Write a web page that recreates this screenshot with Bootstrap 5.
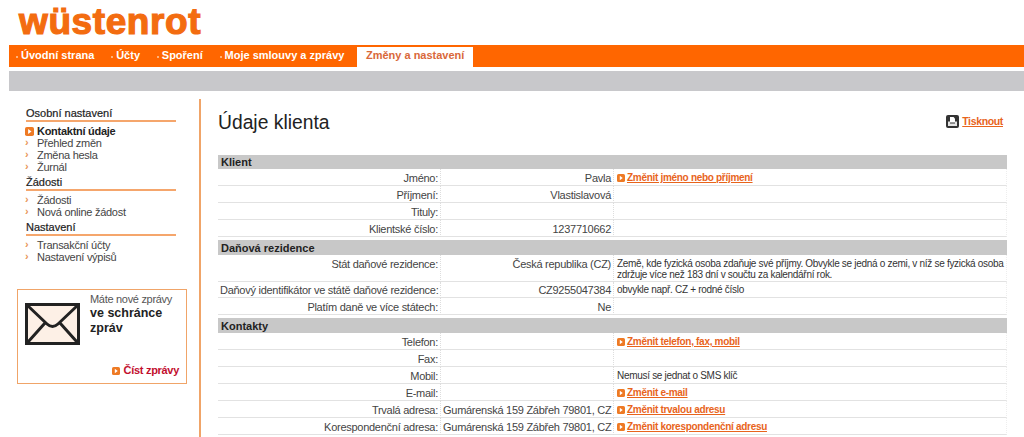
<!DOCTYPE html>
<html lang="cs">
<head>
    <meta charset="UTF-8">
    <meta name="viewport" content="width=device-width, initial-scale=1.0">
    <title>Údaje klienta</title>
    <link href="https://cdn.jsdelivr.net/npm/bootstrap@5.3.0/dist/css/bootstrap.min.css" rel="stylesheet">
    <style>
        body { font-family: "Liberation Sans", Arial, sans-serif; font-size: 11px; line-height: 12px; color: #333; background: #fff; }
        a { color: inherit; }
        .brand-row { height: 45px; padding-left: 19px; }
        .brand-logo { font-size: 37px; line-height: 43px; font-weight: 700; color: #f36c10; letter-spacing: .6px; -webkit-text-stroke: 1.2px #f36c10; }
        .main-menu { margin-left: 9px; height: 22px; background: #ff6600; padding-top: 2px; font-size: 11px; font-weight: 700; color: #fff; }
        .main-menu a { color: #fff; text-decoration: none; line-height: 17px; }
        .menu-item { padding-left: 12px; margin-right: 9.800px; position: relative; }
        .menu-item::before { content: ""; position: absolute; left: 7px; top: 9px; width: 2px; height: 2px; background: #ffb27a; }
        .menu-active { margin-left: 3px; width: 116px; background: #fff; text-align: center; }
        .main-menu .menu-active a { color: #d9683a; }
        .sub-bar { margin: 4px 0 0 9px; height: 20px; background: #c8c8cb; }
        .page-body { margin-top: 8px; height: 338px; }
        .side-col { width: 201px; flex: none; border-right: 2px solid #f0a468; padding: 8px 0 0 17px; }
        .side-head { width: 150px; margin: 0 0 0 9px; font-size: 11px; font-weight: 400; line-height: 13px; color: #222; border-bottom: 2px solid #f5a66c; -webkit-text-stroke: .2px #222; }
        .side-head-next { margin-top: 3px; }
        .side-list { list-style: none; margin: 3px 0 0; padding: 0 0 0 8px; font-size: 11px; letter-spacing: -.27px; line-height: 12px; color: #444; }
        .side-list li { position: relative; padding-left: 12px; }
        .side-list li::before { content: "›"; position: absolute; left: 0; top: -1px; color: #e8955a; font-weight: 700; }
        .side-list li.side-active { font-weight: 700; color: #222; }
        .side-list li.side-active::before { content: none; }
        .side-list li.side-active svg { position: absolute; left: 0; top: 2px; }
        .mail-box { width: 170px; height: 95px; margin-top: 26px; border: 1px solid #f0a468; padding: 2px 7px 0 7px; position: relative; }
        .mail-ico { margin-top: 11px; margin-right: 10px; }
        .mail-text { font-size: 11px; letter-spacing: -.3px; line-height: 14px; color: #555; }
        .mail-strong { display: block; font-size: 12.500px; letter-spacing: 0; font-weight: 700; color: #222; line-height: 15px; }
        .mail-link { position: absolute; right: 7px; bottom: 7px; color: #c20e2e; font-weight: 700; font-size: 11px; letter-spacing: -.3px; line-height: 12px; text-decoration: none; }
        .mail-link .arrow-ico { margin-right: 4px; }
        .content-col { padding: 12px 17px 0 17px; min-width: 0; }
        .title-row { width: 789px; height: 44px; }
        .page-title { font-size: 19.300px; line-height: 24px; font-weight: 400; color: #222; margin: 0; }
        .print-link { color: #e8641c; font-weight: 700; font-size: 10.500px; letter-spacing: -.35px; margin-right: 4px; margin-top: 4px; }
        .print-ico { margin-top: 4px; margin-right: 3px; }
        .client-table { width: 789px; table-layout: fixed; border-collapse: separate; border-spacing: 0; }
        .client-table th { background: #c8c8c8; color: #222; font-size: 11px; font-weight: 700; height: 14px; padding: 0 3px; line-height: 13px; }
        .client-table td { height: 17px; padding: 2px 2px 0; border-bottom: 1px solid #e2e2e2; vertical-align: middle; line-height: 12px; letter-spacing: -.27px; white-space: nowrap; }
        .client-table .sect-gap th { border-top: 3px solid #fff; height: 18px; padding-top: 1px; }
        .client-table td.cell-label { text-align: right; border-right: 1px dotted #ddd; color: #444; }
        .client-table td.cell-value { text-align: right; border-right: 1px dotted #ddd; color: #444; }
        .client-table td.cell-note { color: #333; font-size: 10px; letter-spacing: -.3px; padding-left: 3px; padding-right: 0; border-right: 1px dotted #eee; white-space: normal; }
        .client-table tr.row-tall td { height: 27px; padding-top: 3px; vertical-align: top; }
        .client-table tr.row-tall td.cell-note { line-height: 11px; }
        .client-table tr.row-short td { height: 16px; padding-top: 1px; }
        .change-link { color: #e8641c; font-weight: 700; font-size: 10px; letter-spacing: -.3px; }
        .arrow-ico { vertical-align: -1px; margin-right: 2px; }
    </style>
</head>
<body>
    <svg width="0" height="0" class="position-absolute">
        <symbol id="go" viewBox="0 0 10 10">
            <rect width="10" height="10" rx="2" fill="#ee7a24"/>
            <path d="M3.500 2.300 7.200 5 3.500 7.700z" fill="#fff"/>
        </symbol>
    </svg>

    <div class="brand-row">
        <div class="brand-logo">wüstenrot</div>
    </div>

    <div class="main-menu d-flex">
        <div class="menu-item"><a href="#">Úvodní strana</a></div>
        <div class="menu-item"><a href="#">Účty</a></div>
        <div class="menu-item"><a href="#">Spoření</a></div>
        <div class="menu-item"><a href="#">Moje smlouvy a zprávy</a></div>
        <div class="menu-active"><a href="#">Změny a nastavení</a></div>
    </div>
    <div class="sub-bar"></div>

    <div class="page-body d-flex">
        <div class="side-col">
            <h6 class="side-head">Osobní nastavení</h6>
            <ul class="side-list">
                <li class="side-active"><svg width="9" height="9"><use href="#go"/></svg>Kontaktní údaje</li>
                <li>Přehled změn</li>
                <li>Změna hesla</li>
                <li>Žurnál</li>
            </ul>
            <h6 class="side-head side-head-next">Žádosti</h6>
            <ul class="side-list">
                <li>Žádosti</li>
                <li>Nová online žádost</li>
            </ul>
            <h6 class="side-head side-head-next">Nastavení</h6>
            <ul class="side-list">
                <li>Transakční účty</li>
                <li>Nastavení výpisů</li>
            </ul>
            <div class="mail-box d-flex">
                <svg width="55" height="42" viewBox="0 0 55 42" class="mail-ico flex-shrink-0">
                    <rect x="1.500" y="1.500" width="52" height="39" fill="#fdf0e6" stroke="#222" stroke-width="3"/>
                    <path d="M2 2 22 21Q27.500 26 33 21L53 2M3 39 20 20M52 39 35 20" fill="none" stroke="#222" stroke-width="3"/>
                </svg>
                <div class="mail-text">Máte nové zprávy<span class="mail-strong">ve schránce zpráv</span></div>
                <a class="mail-link" href="#"><svg width="8" height="8" class="arrow-ico"><use href="#go"/></svg>Číst zprávy</a>
            </div>
        </div>

        <div class="content-col flex-grow-1">
            <div class="title-row d-flex justify-content-between">
                <h1 class="page-title">Údaje klienta</h1>
                <div class="d-flex align-items-start">
                    <svg width="13" height="13" viewBox="0 0 13 13" class="print-ico"><rect width="13" height="13" rx="2" fill="#333"/><path d="M4 2h3.500L9 3.500V7.500H4z" fill="#fff"/><path d="M2 6.500h2V8.500h5V6.500h2V11H2z" fill="#e4e4e4"/></svg>
                    <a class="print-link" href="#">Tisknout</a>
                </div>
            </div>
            <table class="client-table">
                <colgroup><col style="width:223px"><col style="width:173px"><col></colgroup>
                <tr><th colspan="3">Klient</th></tr>
                <tr><td class="cell-label">Jméno:</td><td class="cell-value">Pavla</td><td class="cell-note"><svg width="8" height="8" class="arrow-ico"><use href="#go"/></svg><a class="change-link" href="#">Změnit jméno nebo příjmení</a></td></tr>
                <tr><td class="cell-label">Příjmení:</td><td class="cell-value">Vlastislavová</td><td class="cell-note"></td></tr>
                <tr><td class="cell-label">Tituly:</td><td class="cell-value"></td><td class="cell-note"></td></tr>
                <tr><td class="cell-label">Klientské číslo:</td><td class="cell-value">1237710662</td><td class="cell-note"></td></tr>
                <tr class="sect-gap"><th colspan="3">Daňová rezidence</th></tr>
                <tr class="row-tall"><td class="cell-label">Stát daňové rezidence:</td><td class="cell-value">Česká republika (CZ)</td><td class="cell-note">Země, kde fyzická osoba zdaňuje své příjmy. Obvykle se jedná o zemi, v níž se fyzická osoba zdržuje více než 183 dní v součtu za kalendářní rok.</td></tr>
                <tr class="row-short"><td class="cell-label">Daňový identifikátor ve státě daňové rezidence:</td><td class="cell-value">CZ9255047384</td><td class="cell-note">obvykle např. CZ + rodné číslo</td></tr>
                <tr><td class="cell-label">Platím daně ve více státech:</td><td class="cell-value">Ne</td><td class="cell-note"></td></tr>
                <tr class="sect-gap"><th colspan="3">Kontakty</th></tr>
                <tr><td class="cell-label">Telefon:</td><td class="cell-value"></td><td class="cell-note"><svg width="8" height="8" class="arrow-ico"><use href="#go"/></svg><a class="change-link" href="#">Změnit telefon, fax, mobil</a></td></tr>
                <tr><td class="cell-label">Fax:</td><td class="cell-value"></td><td class="cell-note"></td></tr>
                <tr><td class="cell-label">Mobil:</td><td class="cell-value"></td><td class="cell-note">Nemusí se jednat o SMS klíč</td></tr>
                <tr><td class="cell-label">E-mail:</td><td class="cell-value"></td><td class="cell-note"><svg width="8" height="8" class="arrow-ico"><use href="#go"/></svg><a class="change-link" href="#">Změnit e-mail</a></td></tr>
                <tr><td class="cell-label">Trvalá adresa:</td><td class="cell-value">Gumárenská 159 Zábřeh 79801, CZ</td><td class="cell-note"><svg width="8" height="8" class="arrow-ico"><use href="#go"/></svg><a class="change-link" href="#">Změnit trvalou adresu</a></td></tr>
                <tr><td class="cell-label">Korespondenční adresa:</td><td class="cell-value">Gumárenská 159 Zábřeh 79801, CZ</td><td class="cell-note"><svg width="8" height="8" class="arrow-ico"><use href="#go"/></svg><a class="change-link" href="#">Změnit korespondenční adresu</a></td></tr>
            </table>
        </div>
    </div>

    <script src="https://cdn.jsdelivr.net/npm/bootstrap@5.3.0/dist/js/bootstrap.bundle.min.js"></script>
</body>
</html>
